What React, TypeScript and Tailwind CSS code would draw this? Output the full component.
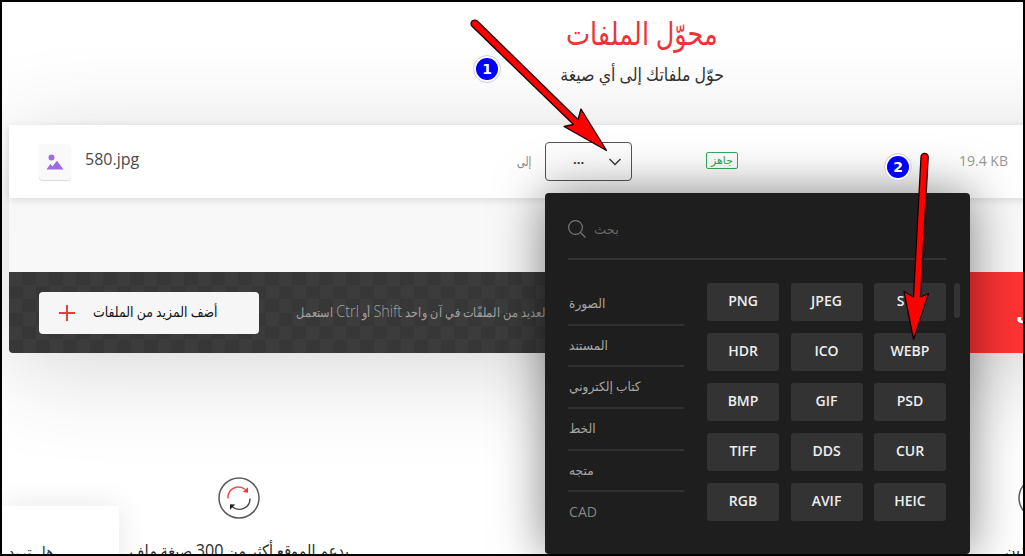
import type { ReactNode } from "react";

const CATEGORIES = ["الصورة", "المستند", "كتاب إلكتروني", "الخط", "متجه", "CAD"];

const FORMATS = [
  "PNG", "JPEG", "SVG",
  "HDR", "ICO", "WEBP",
  "BMP", "GIF", "PSD",
  "TIFF", "DDS", "CUR",
  "RGB", "AVIF", "HEIC",
];

const FEATURES = [
  <>
    يدعم الموقع أكثر من <span className="text-[19px]">300</span> صيغة ملف
  </>,
  "تحويل سريع وسهل",
  "المستفيدين",
];

function ImageIcon() {
  return (
    <svg viewBox="0 0 18 16" className="h-4 w-[18px]" fill="#a06ae0">
      <circle cx="5.5" cy="3.5" r="3" />
      <path d="M0.5 15.5 4.3 10l2 2.6L11 6.8l6.5 8.7z" />
    </svg>
  );
}

function ConvertIcon() {
  return (
    <svg viewBox="0 0 42 42" className="h-[42px] w-[42px] shrink-0" fill="none">
      <circle cx="21" cy="21" r="20" fill="#fff" stroke="#5a5a5a" strokeWidth="1.5" />
      <path d="M9.8 21.5C9.8 10.5 20.5 7.5 27.5 12.5" stroke="#f5474b" strokeWidth="1.4" />
      <path d="m24.8 15 5.2-4.8v5.5z" fill="#f5333a" />
      <path d="M32 21.5C32 31.5 21.5 35 14.5 30" stroke="#444" strokeWidth="1.4" />
      <path d="m17.2 27.5-5.2-.3v5.5z" fill="#222" />
    </svg>
  );
}

function FormatPicker() {
  return (
    <div className="absolute top-[51px] left-0 z-10 h-[361px] w-[425px] rounded-[4px] bg-[#1e1e1e] pt-[27px] pl-[23px] shadow-[0_0_50px_rgba(0,0,0,0.5)]">
      <div className="flex h-10 w-[378px] items-start border-b-2 border-[#333] text-[#666]">
        <svg viewBox="0 0 18 18" className="h-[18px] w-[18px]" fill="none" stroke="#777" strokeWidth="1.2">
          <circle cx="7.5" cy="7.5" r="6.9" />
          <path d="m12.5 12.5 5 5" />
        </svg>
        <span className="ml-2 text-[13px] leading-[18px]">بحث</span>
      </div>
      <div className="mt-[23px] flex items-start">
        <ul className="w-[116px] shrink-0 pt-px">
          {CATEGORIES.map((c) => (
            <li
              key={c}
              className="flex h-[41.7px] items-center border-b-2 border-[#303030] pl-px text-[13px] text-[#a5a5a5] last:border-0 last:pb-1 last:text-[15px] last:text-[#858585]"
            >
              <span className="origin-left scale-x-[0.94] whitespace-nowrap">{c}</span>
            </li>
          ))}
        </ul>
        <div className="ml-[23px] grid w-[239px] shrink-0 grid-cols-3 gap-x-[11.5px] gap-y-3">
          {FORMATS.map((f) => (
            <button
              key={f}
              className="h-[38px] rounded-[3px] bg-[#333] pb-[3px] text-[14px] font-semibold text-[#eee]"
            >
              {f}
            </button>
          ))}
        </div>
        <div className="ml-2 h-[35px] w-1.5 shrink-0 rounded-full bg-[#333]" />
      </div>
    </div>
  );
}

function FileRow() {
  return (
    <div className="flex h-[73px] items-center bg-white pl-[30px] shadow-[0_2px_8px_rgba(0,0,0,0.12)]">
      <div className="flex h-9 w-8 items-center justify-center rounded-[4px] bg-[#f9f9fa] shadow-[0_1px_1px_rgba(0,0,0,0.15)]">
        <ImageIcon />
      </div>
      <span className="mb-[5px] ml-[14px] w-[432px] text-[16px] text-[#4a4a4a]">580.jpg</span>
      <span className="w-7 text-[13px] whitespace-nowrap text-[#888]">
        <span className="inline-block origin-left scale-x-[0.78]">إلى</span>
      </span>
      <div className="relative">
        <button className="flex h-[39px] w-[87px] items-center rounded-[4px] border border-[#555] bg-[#fdfdfd] text-[#333]">
          <span className="ml-[27px] w-8 pb-1 text-left text-[13px] font-bold">...</span>
          <svg viewBox="0 0 12 8" className="ml-1 h-2 w-3" fill="none" stroke="#333" strokeWidth="1.3">
            <path d="m.5 1 5.5 5.5L11.500 1" />
          </svg>
        </button>
        <FormatPicker />
      </div>
      <span className="mb-0.5 ml-[74px] flex h-[17px] w-8 items-center justify-center rounded-[2px] border border-[#39a958] text-[11px] text-[#39a958]">
        جاهز
      </span>
      <span className="mb-0.5 ml-[221px] text-[14px] text-[#999]">19.4 KB</span>
    </div>
  );
}

function Toolbar() {
  return (
    <div className="flex h-[81px] items-center overflow-hidden rounded-b-[4px] bg-[repeating-conic-gradient(#373737_0_25%,#3c3c3c_0_50%)] bg-[length:27px_27px] pl-[30px]">
      <button className="flex h-[42px] w-[220px] shrink-0 items-center rounded-[4px] bg-[#f6f6f6] pl-5">
        <svg viewBox="0 0 16 16" className="h-4 w-4" stroke="#ef3b3b" strokeWidth="2">
          <path d="M0 8h16M8 0v16" />
        </svg>
        <span className="ml-[18px] origin-left scale-x-[0.89] pb-0.5 text-[14px] font-medium whitespace-nowrap text-[#111]">
          أضف المزيد من الملفات
        </span>
      </button>
      <span className="ml-[37px] w-[595px] shrink-0 origin-left scale-x-[0.87] pb-[3px] text-[13px] font-light whitespace-nowrap text-[#a0a0a0]">
        استعمل <span className="text-[16.5px]">Ctrl</span> أو <span className="text-[16.5px]">Shift</span> لتحديد العديد من الملفّات في آن واحد
      </span>
      <button className="h-full grow bg-[#ff3333] pl-[125px] text-left text-[20px] font-bold text-white">
        تحويل
      </button>
    </div>
  );
}

function StepBadge({ className, children }: { className: string; children: ReactNode }) {
  return (
    <span
      className={`absolute z-20 flex h-7 w-7 items-center justify-center rounded-full border border-[#cfcfda] bg-white ${className}`}
    >
      <span className="flex h-[22px] w-[22px] items-center justify-center rounded-full bg-[#0000ff] font-['DejaVu_Sans'] text-[14px] leading-none font-bold text-white">
        {children}
      </span>
    </span>
  );
}

export default function App() {
  return (
    <div className="relative h-[556px] w-[1025px] overflow-hidden border-2 border-black bg-white font-['Open_Sans','DejaVu_Sans',sans-serif]">
      <header className="flex h-[123px] w-[1280px] flex-col items-center pt-2">
        <h1 className="scale-x-[0.8] text-[32px] leading-[46px] text-[#ee3338]">محوّل الملفات</h1>
        <p className="mt-1 scale-x-[0.88] text-[18px] leading-[28px] text-[#333]">حوّل ملفاتك إلى أي صيغة</p>
      </header>

      <main className="ml-[7px] w-[1266px] rounded-[4px] bg-[#f8f8f8] shadow-[0_15px_100px_rgba(0,0,0,0.16)]">
        <FileRow />
        <div className="h-[74px]" />
        <Toolbar />
      </main>

      <section className="ml-[37px] grid w-[1200px] grid-cols-3 pt-[124px]">
        {FEATURES.map((f, i) => (
          <div key={i} className="flex flex-col items-center">
            <ConvertIcon />
            <p dir="rtl" className="mt-[17px] scale-x-[0.85] text-[17px] leading-7 whitespace-nowrap text-[#2d2d2d]">
              {f}
            </p>
          </div>
        ))}
      </section>

      <aside className="absolute top-[504px] left-0 h-20 w-[117px] bg-white pt-[34px] pl-1.5 text-[16px] whitespace-nowrap text-[#333] shadow-[0_0_30px_rgba(0,0,0,0.1)]">
        <span className="inline-block origin-left scale-x-[0.9]">هل تريد</span>
      </aside>

      <StepBadge className="top-[53px] left-[471px]">1</StepBadge>
      <StepBadge className="top-[151px] left-[882px]">2</StepBadge>

      {/* pointer arrows */}
      <svg
        viewBox="0 0 1021 552"
        className="pointer-events-none absolute inset-0 z-20 h-[552px] w-[1021px]"
        fill="#ff0000"
        stroke="#1a0000"
        strokeWidth="1.3"
        strokeLinejoin="round"
      >
        <path d="M470.3 24.5a3.7 3.7 0 0 1 5-5.5L576 117.500 579 107l25.500 41.500L562 124.500l9.500-2z" />
        <path d="M919 155a3.6 3.6 0 0 1 7.2 0L918.500 295l8-3.500L911.500 337.500 902 289.500l9.500 5.500z" />
      </svg>
    </div>
  );
}
